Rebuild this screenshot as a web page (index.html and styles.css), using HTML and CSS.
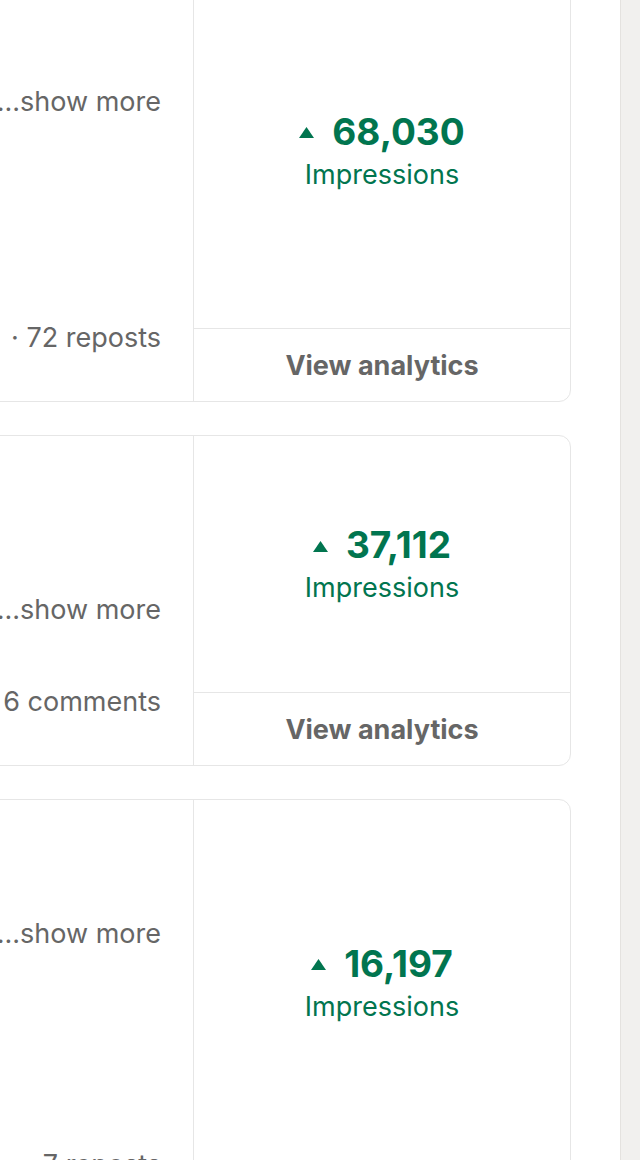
FILE: index.html
```html
<!DOCTYPE html>
<html lang="en">
<head>
    <meta charset="UTF-8">
    <meta name="viewport" content="width=device-width, initial-scale=1.0">
    <title>Post analytics</title>
    <link rel="stylesheet" href="styles.css">
</head>
<body>
    <div class="page">
        <main class="feed">
            <article class="post post-first">
                <div class="post-body">
                    <p class="post-text">...show more</p>
                    <p class="post-stats">· 72 reposts</p>
                </div>
                <div class="post-metrics">
                    <div class="metric">
                        <div class="metric-value">
                            <svg class="arrow" width="15" height="11" viewBox="0 0 15 11"><path d="M7.5 0L15 11H0z"/></svg>
                            68,030
                        </div>
                        <div class="metric-label">Impressions</div>
                    </div>
                    <a class="metric-link" href="#">View analytics</a>
                </div>
            </article>

            <article class="post post-short">
                <div class="post-body">
                    <p class="post-text">...show more</p>
                    <p class="post-stats">6 comments</p>
                </div>
                <div class="post-metrics">
                    <div class="metric">
                        <div class="metric-value">
                            <svg class="arrow" width="15" height="11" viewBox="0 0 15 11"><path d="M7.5 0L15 11H0z"/></svg>
                            37,112
                        </div>
                        <div class="metric-label">Impressions</div>
                    </div>
                    <a class="metric-link" href="#">View analytics</a>
                </div>
            </article>

            <article class="post post-last">
                <div class="post-body">
                    <p class="post-text">...show more</p>
                    <p class="post-stats">· 7 reposts</p>
                </div>
                <div class="post-metrics">
                    <div class="metric">
                        <div class="metric-value">
                            <svg class="arrow" width="15" height="11" viewBox="0 0 15 11"><path d="M7.5 0L15 11H0z"/></svg>
                            16,197
                        </div>
                        <div class="metric-label">Impressions</div>
                    </div>
                    <a class="metric-link" href="#">View analytics</a>
                </div>
            </article>
        </main>
        <aside class="rail"></aside>
    </div>
</body>
</html>
```

FILE: styles.css
```css
body {
    margin: 0;
    background: #fff;
    font-family: Inter, "Liberation Sans", sans-serif;
    overflow: hidden;
}
.page {
    display: flex;
    min-height: 1160px;
}
.feed {
    flex: 1;
    margin: -28px 49px 0 -260px;
    display: flex;
    flex-direction: column;
    gap: 33px;
}
.post {
    display: flex;
    height: 430px;
    box-sizing: border-box;
    border: 1px solid #e6e6e6;
    border-radius: 12px;
    flex-shrink: 0;
}
.post-short {
    height: 331px;
}
.post-last {
    height: 440px;
}
.post-body {
    flex: 1;
    display: flex;
    flex-direction: column;
    align-items: flex-end;
    padding: 0 32px 45px 0;
    font-size: 27px;
    line-height: 36px;
    color: #666;
}
.post-first .post-body {
    padding-top: 111px;
}
.post-short .post-body {
    padding-top: 156px;
}
.post-last .post-body {
    padding-top: 116px;
    padding-bottom: 55px;
}
.post-body p {
    margin: 0;
    white-space: nowrap;
}
.post-stats {
    margin-top: auto !important;
}
.post-metrics {
    width: 376px;
    border-left: 1px solid #e6e6e6;
    display: flex;
    flex-direction: column;
}
.metric {
    flex: 1;
    display: flex;
    flex-direction: column;
    align-items: center;
    justify-content: center;
    color: #01754f;
}
.metric-value {
    display: flex;
    align-items: center;
    gap: 18px;
    margin-bottom: 4px;
    font-size: 37px;
    font-weight: 700;
    line-height: 44px;
}
.arrow {
    fill: #01754f;
    margin-top: 2px;
}
.metric-label {
    font-size: 27px;
    line-height: 34px;
}
.metric-link {
    height: 72px;
    border-top: 1px solid #e6e6e6;
    display: flex;
    align-items: center;
    justify-content: center;
    font-size: 27px;
    font-weight: 700;
    color: #666;
    text-decoration: none;
}
.rail {
    width: 19px;
    background: #f1f0ee;
    border-left: 1px solid #e4e2df;
}
```
